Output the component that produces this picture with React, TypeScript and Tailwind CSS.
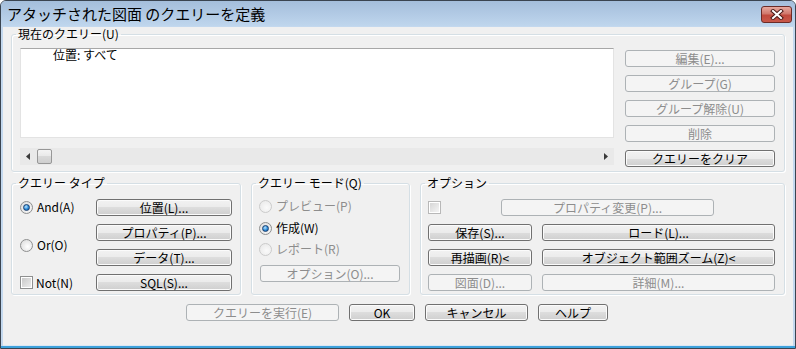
import clsx from "clsx";

const enabledBtn =
  "border-[#707070] text-black bg-[linear-gradient(180deg,#f2f2f2_0%,#ebebeb_50%,#dddddd_50%,#cfcfcf_100%)] shadow-[inset_0_0_0_1px_#fbfbfb]";
const disabledBtn = "border-[#adb2b5] bg-[#f4f4f4] text-[#8d8d8d]";

function Btn({ label, className, disabled }: { label: string; className?: string; disabled?: boolean }) {
  return (
    <div
      className={clsx(
        "h-[17px] flex items-center justify-center rounded-[3px] border text-[12px] leading-[15px] whitespace-nowrap",
        disabled ? disabledBtn : enabledBtn,
        className
      )}
    >
      {label}
    </div>
  );
}

function Radio({ label, checked, disabled }: { label: string; checked?: boolean; disabled?: boolean }) {
  return (
    <div className="flex items-center gap-[4px] h-[14px]">
      <div
        className={clsx(
          "w-[13px] h-[13px] rounded-full border flex items-center justify-center",
          disabled
            ? "border-[#cbcbcb] bg-[radial-gradient(circle_at_60%_60%,#fafafa,#e6e6e6)]"
            : "border-[#8e8f8f] bg-[radial-gradient(circle_at_60%_60%,#ffffff,#d7d7d7)]"
        )}
      >
        {checked && (
          <div className="w-[7px] h-[7px] rounded-full border border-[#1b3f6e] bg-[radial-gradient(circle_at_40%_35%,#b9e4ff,#2a8ad8_55%,#0f4e95)]" />
        )}
      </div>
      <span className={clsx("text-[12px] leading-[14px]", disabled ? "text-[#8d8d8d]" : "text-black")}>{label}</span>
    </div>
  );
}

function Check({ label, faded }: { label?: string; faded?: boolean }) {
  return (
    <div className="flex items-center gap-[3px] h-[14px]">
      <div
        className={clsx(
          "w-[13px] h-[13px] border flex items-center justify-center bg-white",
          faded ? "border-[#b8b8b8]" : "border-[#8e8f8f]"
        )}
      >
        <div
          className={clsx(
            "w-[9px] h-[9px]",
            faded
              ? "bg-[linear-gradient(135deg,#d6d6d6,#f4f4f4)]"
              : "bg-[linear-gradient(135deg,#c9c9c9,#ececec)]"
          )}
        />
      </div>
      {label && <span className="text-[12px] leading-[14px] text-black">{label}</span>}
    </div>
  );
}

function Group({ title, className, children }: { title: string; className?: string; children: React.ReactNode }) {
  return (
    <fieldset
      className={clsx(
        "border border-[#d5dfe5] rounded-[3px] shadow-[1px_1px_0_#ffffff,inset_1px_1px_0_#ffffff]",
        className
      )}
    >
      <legend className="ml-[4px] px-[2px] text-[12px] leading-[14px] text-black">{title}</legend>
      {children}
    </fieldset>
  );
}

export default function App() {
  return (
    <div className="w-[796px] h-[349px] font-['Noto_Sans_CJK_JP','Noto_Sans',sans-serif] bg-white">
      <div className="w-full h-full flex flex-col border border-[#3a4450] rounded-t-[6px] bg-[#c3d8ee] overflow-hidden">
        {/* title bar */}
        <div className="h-[25px] shrink-0 flex items-center bg-[linear-gradient(180deg,#a4bedb_0%,#b4cce6_60%,#bfd6ed_100%)]">
          <span className="ml-[6px] flex-1 text-[15px] leading-[20px] text-black">
            アタッチされた図面 のクエリーを定義
          </span>
          <div className="mr-[3px] mt-[1px] w-[31px] h-[17px] rounded-[3px] border border-[#6b2b27] bg-[linear-gradient(180deg,#e8a99f_0%,#d0786c_45%,#c14a3d_55%,#c8584a_100%)] flex items-center justify-center">
            <svg width="14" height="11" viewBox="0 0 14 11">
              <path d="M3 2 L11 9 M11 2 L3 9" stroke="#4a1a17" strokeWidth="4" strokeLinecap="square" />
              <path d="M3 2 L11 9 M11 2 L3 9" stroke="#ffffff" strokeWidth="2" strokeLinecap="square" />
            </svg>
          </div>
        </div>

        {/* body */}
        <div className="flex-1 mx-[2px] border-t border-[#c3d8ee] bg-[#f0f0f0] px-[8px] flex flex-col text-black">
          <Group title="現在のクエリー(U)" className="pb-[4px]">
            <div className="flex pt-[7px] pl-[8px]">
              <div className="w-[594px] flex flex-col">
                <div className="h-[90px] bg-white border border-[#e3e3e3] border-t-[#a7a7a7] pl-[32px] text-[12px] leading-[11px]">
                  位置: すべて
                </div>
                <div className="mt-[10px] h-[17px] bg-[#e9e9e9] flex items-center">
                  <svg width="4" height="7" viewBox="0 0 4 7" className="ml-[6px]">
                    <path d="M4 0 L0 3.5 L4 7 Z" fill="#3a3a3a" />
                  </svg>
                  <div className="ml-[7px] w-[15px] h-[15px] rounded-[2px] border border-[#979797] bg-[linear-gradient(180deg,#f4f4f4_0%,#e8e8e8_50%,#d9d9d9_50%,#cfcfcf_100%)]" />
                  <div className="flex-1" />
                  <svg width="4" height="7" viewBox="0 0 4 7" className="mr-[6px]">
                    <path d="M0 0 L4 3.5 L0 7 Z" fill="#3a3a3a" />
                  </svg>
                </div>
              </div>
              <div className="ml-[11px] pt-[2px] w-[150px] flex flex-col gap-[8px]">
                <Btn label="編集(E)..." disabled />
                <Btn label="グループ(G)" disabled />
                <Btn label="グループ解除(U)" disabled />
                <Btn label="削除" disabled />
                <Btn label="クエリーをクリア" />
              </div>
            </div>
          </Group>

          <div className="mt-[4px] flex gap-[10px]">
            <Group title="クエリー タイプ" className="w-[230px] pb-[3px]">
              <div className="pt-[9px] pl-[8px] grid grid-cols-[76px_136px] grid-rows-[17px_17px_17px_17px] gap-y-[8px]">
                <div className="self-start pt-[1px]">
                  <Radio label="And(A)" checked />
                </div>
                <Btn label="位置(L)..." />
                <div className="row-span-2 self-center">
                  <Radio label="Or(O)" />
                </div>
                <Btn label="プロパティ(P)..." />
                <Btn label="データ(T)..." className="col-start-2" />
                <div className="self-center">
                  <Check label="Not(N)" />
                </div>
                <Btn label="SQL(S)..." />
              </div>
            </Group>

            <Group title="クエリー モード(Q)" className="w-[159px] pb-[3px]">
              <div className="pt-[9px] pl-[7px] flex flex-col">
                <Radio label="プレビュー(P)" disabled />
                <div className="mt-[8px]">
                  <Radio label="作成(W)" checked />
                </div>
                <div className="mt-[7px]">
                  <Radio label="レポート(R)" disabled />
                </div>
                <Btn label="オプション(O)..." disabled className="mt-[9px] ml-[1px] w-[140px]" />
              </div>
            </Group>

            <Group title="オプション" className="flex-1 pb-[3px]">
              <div className="pt-[9px] pl-[7px] grid grid-cols-[104px_233px] grid-rows-[17px_17px_17px_17px] gap-x-[10px] gap-y-[8px]">
                <div className="col-span-2 flex items-center">
                  <Check faded />
                  <Btn label="プロパティ変更(P)..." disabled className="ml-[60px] w-[213px]" />
                </div>
                <Btn label="保存(S)..." />
                <Btn label="ロード(L)..." />
                <Btn label="再描画(R)<" />
                <Btn label="オブジェクト範囲ズーム(Z)<" />
                <Btn label="図面(D)..." disabled />
                <Btn label="詳細(M)..." disabled />
              </div>
            </Group>
          </div>

          <div className="mt-[9px] pl-[175px] flex gap-[10px]">
            <Btn label="クエリーを実行(E)" disabled className="w-[153px]" />
            <Btn label="OK" className="w-[66px]" />
            <Btn label="キャンセル" className="w-[103px]" />
            <Btn label="ヘルプ" className="w-[70px]" />
          </div>
        </div>
        <div className="h-[1px] mx-[2px] bg-[#dbe8f5] shrink-0" />
        <div className="h-[2px] bg-[#3ea2dc] shrink-0" />
      </div>
    </div>
  );
}
